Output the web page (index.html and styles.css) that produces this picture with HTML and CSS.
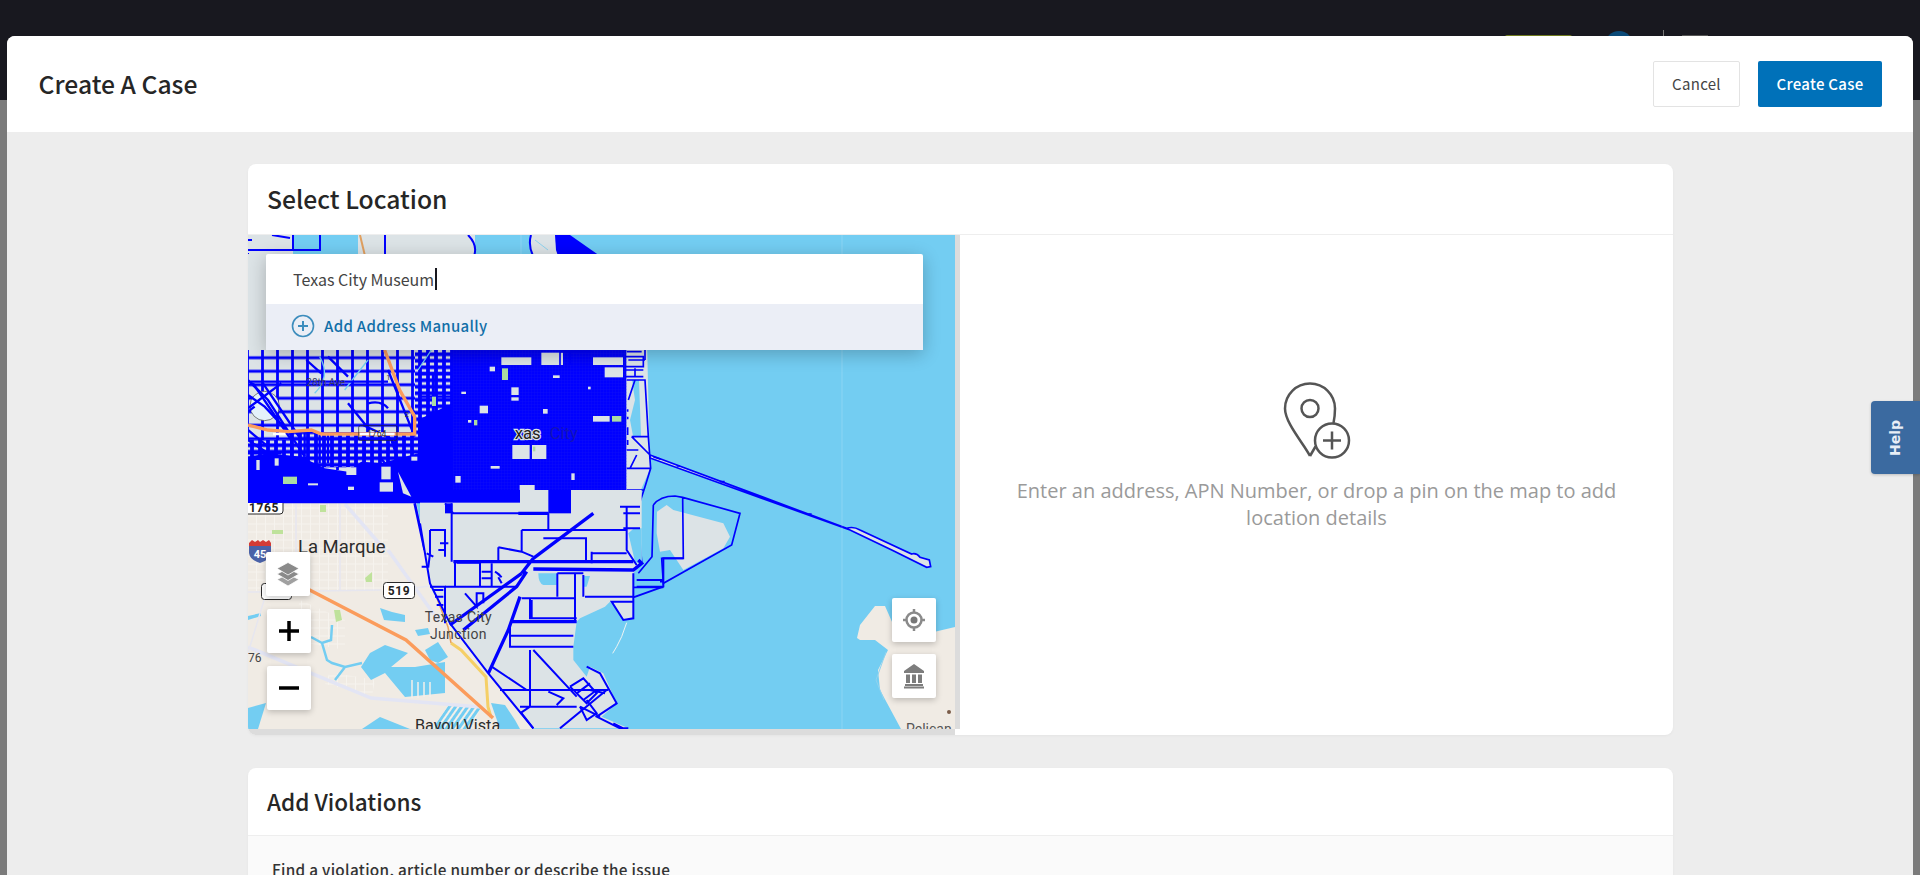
FILE: index.html
```html
<!DOCTYPE html>
<html lang="en">
<head>
<meta charset="utf-8">
<title>Create A Case</title>
<link rel="stylesheet" href="styles.css">
</head>
<body>
<div class="backdrop">
  <div class="topbar">
    <span class="peek-badge"></span>
    <span class="peek-avatar"></span>
    <span class="peek-rule"></span>
    <span class="peek-dots"></span>
  </div>
</div>
<main class="modal">
  <header class="modal-head">
    <h1 class="modal-title">Create A Case</h1>
    <div class="modal-actions">
      <button class="btn btn-plain">Cancel</button>
      <button class="btn btn-primary">Create Case</button>
    </div>
  </header>
  <div class="modal-body">
    <section class="card">
      <h2 class="card-title">Select Location</h2>
      <div class="location">
        <div class="map-col">
          <div class="map">
            <svg class="map-svg" viewBox="248 235 707 494" width="707" height="494" aria-hidden="true">
              <defs>
                <pattern id="streets" width="15" height="13.5" patternUnits="userSpaceOnUse">
                  <rect width="15" height="13.5" fill="#dce3e6"/>
                  <path d="M7.500 0V13.500M0 6.750H15" stroke="#0000ff" stroke-width="2.800" fill="none"/>
                </pattern>
                <pattern id="streets-fine" width="8" height="6.500" patternUnits="userSpaceOnUse">
                  <rect width="8" height="6.500" fill="#dce3e6"/>
                  <path d="M4 0V6.500M0 3.250H8" stroke="#0000ff" stroke-width="3.800" fill="none"/>
                </pattern>
                <pattern id="town" width="9" height="8" patternUnits="userSpaceOnUse">
                  <path d="M4.500 0V8M0 4H9" stroke="#f6f3ee" stroke-width="1" fill="none"/>
                </pattern>
                <pattern id="dense" width="9" height="9" patternUnits="userSpaceOnUse">
                  <path d="M4.500 0V9M0 4.500H9" stroke="#1212f6" stroke-width="1" fill="none"/>
                </pattern>
                <pattern id="marina" width="5" height="5" patternUnits="userSpaceOnUse" patternTransform="rotate(35)">
                  <rect width="5" height="5" fill="#73cdf2"/>
                  <rect width="2" height="5" fill="#f3f0ea"/>
                </pattern>
              </defs>

              <rect class="water" x="248" y="235" width="707" height="494"/>

              <!-- mainland -->
              <path class="land" d="M248 500H416L425 550L432 590L450 625L488 673L533 729H248Z"/>
              <rect class="town" x="248" y="503" width="140" height="88"/>
              <path class="town" d="M300 600L345 620L345 650L290 640Z"/>
              <path class="town" d="M330 672L375 680L372 696L325 684Z"/>

              <!-- water in the mainland -->
              <path class="water" d="M370 653L385 645L408 653L391 667L415 667L445 662L445 693L405 697L385 673L371 680L361 667Z"/>
              <path class="water" d="M380 608L392 612L405 615L405 622L384 620Z"/>
              <path class="water" d="M415 630L428 628L430 634L418 636Z"/>
              <path class="water" d="M425 650L438 642L448 657L438 663L430 660Z"/>
              <path class="water" d="M248 708L266 703L258 729H248Z"/>
              <path class="water" d="M362 729L380 717L410 729Z"/>
              <path class="water" d="M491 703L505 705L515 720L520 729L500 729Z"/>
              <path class="water" d="M248 616L261 613V616L248 620Z"/>
              <path class="canal" d="M311 637L322 643L331 640L332 625M322 643L327 660L332 663L345 667L362 663M345 667L335 680"/>
              <path class="marina" d="M435 725L450 703L481 708L470 729H435Z"/>
              <path class="marina-b" d="M412 698V680M418 698V682M424 697V682M430 697V682"/>

              <!-- mainland roads -->
              <path class="road" d="M248 647L371 698L481 707"/>
              <path class="road" d="M388 550L438 620"/>
              <path class="road-thin" d="M265 597L248 653M248 592L381 590M414 588L430 586M340 504V590M296 504V590"/>
              <path class="road" d="M345 504L385 550"/>
              <path class="pond" d="M334 610L340 610L342 620L336 622Z"/>
              <path class="pond" d="M272 530H283V534H272Z"/>
              <path class="pond" d="M320 505H326V512H320Z"/>
              <path class="pond" d="M365 578L372 572V582H366Z"/>
              <path class="hwy-y" d="M451 643L461 650L486 677L488 707L491 717"/>
              <path class="hwy-o" d="M300 585L406 640L493 718"/>
              <path class="hwy-thin" d="M415 503L425 550L430 580L448 627L451 643"/>

              <!-- far island -->
              <path class="land" d="M857 638L860 625L875 606L885 606L900 640L955 627V729H901L880 690L878 670L888 650L875 640L860 640Z"/>
              <path class="canal-thin" d="M886 652L876 680L884 700"/>
              <circle class="poi" cx="949" cy="712" r="2"/>

              <!-- city base -->
              <path class="parcel" d="M248 235H293V256H248ZM358 235H475V256H358ZM531 235H560V256H531Z"/>
              <path class="parcel" d="M248 255H645L650 469L640 492H415L416 503H248Z"/>
              <rect class="grid" x="248" y="350" width="205" height="120"/>
              <rect class="grid-fine" x="290" y="432" width="130" height="35"/>
              <rect class="grid-fine" x="415" y="350" width="42" height="100"/>
              <rect class="grid-fine" x="248" y="440" width="50" height="30"/>
              <path class="water" d="M632 380L639 380L641 436L633 436L630 420L635 400Z"/>

              <!-- top strip, peeking over the search box -->
              <g class="parcels">
                <path d="M248 250H320V235M293 235V250M248 240H252M272 235L290 238M248 253V254"/>
                <path class="pl-b" d="M385 235V256M531 235Q528 245 533 256"/>
                <path d="M468 235Q478 245 474 256"/>
                <path class="solid" d="M555 235L570 235L600 256H558L556 250Z"/>
                <path class="canal-thin" d="M535 240L548 250"/>
                <path class="hwy-line" d="M360 235L365 256"/>
              </g>

              <!-- zoom 6 coordinates: west and centre of the city -->
              <g transform="translate(248 340) scale(.33333)">
                <g class="canal-w">
                  <path d="M510 90L550 30M555 170V205M215 50Q250 110 200 160M360 60Q320 110 290 150"/>
                </g>
                <circle cx="50" cy="198" r="44" fill="#e4f1fa" stroke="#444" stroke-width="2"/>
                <g class="lines-6">
                  <path d="M0 125H420M0 165L50 200L120 275M0 120L60 180L170 350M20 200L0 215M100 130L0 205M300 190L365 270M360 190Q400 180 420 205M420 90L500 290M510 100H610M510 170H610M555 100V230"/>
                  <path d="M240 50L300 110M175 60L220 100M345 255L420 290L440 310M395 350L500 480M430 300L470 420M0 340H100M240 280V370M300 280V370M350 300V380"/>
                  <path d="M15 130L130 300M45 130L160 300M0 270L60 320M130 270V350M170 270V350M215 285V370M0 300L60 340M480 360L530 380M440 380L500 420"/>
                </g>
                <path class="solid" d="M615 30H1135V460H970V525H900V460H810V510H600V490H0V350L60 340L160 350L230 385L300 395L340 365L400 370L510 340V240L560 215L615 190Z"/>
                <path fill="url(#dense)" d="M615 30H1135V460H615Z"/>
                <g class="holes">
                  <rect x="760" y="52" width="90" height="23"/>
                  <rect x="880" y="38" width="65" height="37"/>
                  <rect x="1035" y="52" width="90" height="23"/>
                  <rect x="1070" y="82" width="55" height="30"/>
                  <rect x="790" y="142" width="22" height="23"/>
                  <rect x="790" y="172" width="22" height="10"/>
                  <rect x="695" y="197" width="25" height="23"/>
                  <rect x="1035" y="228" width="50" height="17"/>
                  <rect x="793" y="315" width="52" height="42"/>
                  <rect x="852" y="315" width="43" height="42"/>
                  <rect x="885" y="207" width="14" height="14"/>
                  <rect x="728" y="378" width="27" height="8"/>
                  <rect x="622" y="408" width="16" height="20"/>
                  <rect x="295" y="382" width="30" height="23"/>
                  <rect x="400" y="380" width="28" height="38"/>
                  <rect x="395" y="427" width="40" height="28"/>
                  <rect x="970" y="400" width="10" height="20"/>
                  <rect x="725" y="80" width="16" height="14"/>
                  <rect x="915" y="106" width="20" height="8"/>
                  <rect x="1020" y="140" width="8" height="8"/>
                  <rect x="660" y="240" width="10" height="8"/>
                  <rect x="640" y="155" width="14" height="7"/>
                  <rect x="700" y="470" width="22" height="9"/>
                  <rect x="640" y="452" width="14" height="7"/>
                  <rect x="550" y="455" width="26" height="7"/>
                  <rect x="80" y="355" width="12" height="22"/>
                  <rect x="25" y="360" width="10" height="30"/>
                  <rect x="300" y="440" width="18" height="10"/>
                  <rect x="180" y="430" width="30" height="6"/>
                  <rect x="490" y="350" width="18" height="12"/>
                  <path d="M450 395L490 470L465 460Z"/>
                  <path d="M815 435H860V450L900 460V490H815Z"/>
                </g>
                <g class="greens">
                  <rect x="762" y="85" width="18" height="35"/>
                  <rect x="1092" y="228" width="28" height="17"/>
                  <rect x="105" y="410" width="42" height="22"/>
                  <rect x="678" y="240" width="10" height="16"/>
                  <rect x="552" y="170" width="12" height="28"/>
                  <rect x="855" y="320" width="7" height="14"/>
                </g>
                <g class="lines-6 thick">
                  <path d="M815 480L900 468M810 522H1000L1040 490M970 478H1135M970 505H1040M1135 450L1135 620"/>
                  <path d="M1040 490Q1060 470 1075 490T1100 490Q1130 500 1125 530H1085Q1065 520 1050 525L1040 510Z"/>
                  <path d="M500 490L530 630M610 495V525M815 570V640M820 570H1015V640"/>
                  <path d="M548 570H600V625M590 610H560"/>
                  <path d="M900 520V620"/>
                </g>
                <path class="hwy-white" d="M0 255L60 270L120 275L190 270L220 282H500V230L455 150L410 30"/>
                <path class="hwy-cap" d="M75 282H112M335 282H440"/>
                <g class="shield-outline"><rect x="332" y="257" width="115" height="44" rx="5"/></g>
                <text class="lab-dark small" x="175" y="137">28th Ave</text>
                <text class="lab-dark" x="357" y="292" font-size="26" fill="#222" stroke="none">1764</text>
                <text class="lab-big" x="800" y="298">xas</text>
                <text class="lab-dim" x="905" y="298">City</text>
                <text class="lab-dark" x="415" y="120" font-size="22">1</text>
                <text class="lab-dark" x="470" y="232" font-size="22">2</text>
              </g>

              <!-- zoom 7 coordinates: east edge, causeway, dredge island -->
              <g transform="translate(560 340) scale(.33333)">
                <path class="parcel" d="M270 345L860 565Q880 558 900 570L1055 642Q1070 638 1080 652L1108 660L1112 680L1100 682L1000 632L870 570L270 354Z"/>
                <path class="pier" d="M270 345L860 565Q880 558 900 570L1055 642Q1070 638 1080 652L1108 660L1112 680L1100 682L1000 632L870 570L270 354Z"/>
                <path class="pier" d="M350 378h10M480 425h14M745 522h10M280 350l22 8"/>
                <path class="parcel" d="M291 515L320 495L340 510L490 550L510 590L490 625L370 690L330 630L300 635L290 580Z"/>
                <path class="pier" d="M280 495Q300 468 345 468L368 472L540 520L515 615L310 730L305 655H370L368 475M280 495L276 650L235 700M250 725H310M222 742H310"/>
                <g class="pier">
                  <path d="M255 30V60M200 120H255L265 290L272 385L255 440L232 510L245 665L215 700M205 180L225 120M215 290H265M215 290L270 345M200 385H272M200 450H250M230 345L210 385M200 330H235"/>
                  <path d="M195 50H250V80H195M205 60H255M195 90H250M195 110H250M225 85V110M200 35H245"/>
                  <path d="M203 208V215M203 230V238M203 262V285M203 300V315M0 35V75M30 35V75"/>
                  <path d="M0 35H95M200 510H240M200 565H240M195 535H240M100 520H200"/>
                </g>
              </g>

              <!-- zoom 9 coordinates: south of the city -->
              <g transform="translate(420 490) scale(.33333)">
                <path class="parcel" d="M0 0H665V220L640 250V322L640 385L610 390L580 345L570 335L555 350L480 385L470 395L460 470V510L500 560L510 530L550 550L590 640L545 680L625 715H340L205 550L90 400L30 280L0 100Z"/>
                <path class="water" d="M355 250H410V285H370Q355 280 355 250Z"/>
                <path class="water" d="M490 258H510L500 290H492Z"/>
                <path class="water" d="M642 115H665V225L645 215L625 130Z"/>
                <path class="water" d="M650 260H720V285H650Z"/>
                <path class="reef" d="M620 398L605 440L590 470L578 490"/>
                <g class="solid-6">
                  <rect x="385" y="0" width="68" height="70"/>
                  <rect x="300" y="66" width="85" height="8"/>
                  <rect x="0" y="0" width="300" height="38"/>
                  <rect x="75" y="40" width="22" height="30"/>
                </g>
                <g class="lines-9">
                  <path d="M95 40V215M75 40L100 70H385M385 70V120M305 120H460M305 120V185M235 172L305 185L340 200M235 172V215M370 145H498V215M515 190H620M515 185V220"/>
                  <path d="M30 120H75V200M30 120V190L25 230L5 230M60 160H85M55 180H75V200M20 190L40 200"/>
                  <path d="M105 215V290M180 215V290M185 245H215M185 265H215M215 220V290M110 218H178M75 290H290"/>
                  <path d="M30 290H75V400M40 300H70M45 320H70M50 345H70M135 310L170 350V310H190V340"/>
                  <path d="M305 325H465M335 330V385M465 250V395M412 250V320M490 255V320M412 250H490M495 320H640M330 325V385H470M270 400V470H460M270 437H460"/>
                  <path d="M330 480V650M340 480L470 620M240 600H565M215 530L320 600M385 605L430 625L410 645M300 650H470M305 670L340 715M300 670L330 650M420 715L560 600"/>
                  <path d="M450 590L490 565L530 610L500 640L450 590M470 610L510 580M490 630L530 600M510 600L555 610M480 650L500 690L530 670L500 630"/>
                  <path d="M500 530L540 550L590 640L530 680L600 715H625M580 700L610 715M480 650L540 680"/>
                  <path d="M620 50V180L650 225M600 50H660M610 70H660M610 115H660M455 120H620M640 250V322L730 290V205H790M650 270H730M650 290H730M640 322V385L610 390L575 335H640"/>
                  <path d="M232 250L245 262M225 245L240 255M235 262L245 280"/>
                  <path d="M0 100L30 280L90 400L205 550L340 715"/>
                </g>
                <g class="lines-9 heavy">
                  <path d="M100 215H640M295 70H385M275 395H470M300 320L265 420L205 550M305 250L90 405M130 420L290 290L320 245M340 205L520 70M305 250L340 205"/>
                  <path d="M340 237L640 240L665 220L655 210"/>
                </g>
                <text class="lab" x="14" y="395">Texas City</text>
                <text class="lab" x="30" y="447">Junction</text>
              </g>

              <!-- seams -->
              <path class="seam" d="M842 235V729M521 235V340"/>

              <!-- labels and shields -->
              <text class="lab lab-town" x="298" y="553">La Marque</text>
              <text class="lab lab-town lab-bayou" x="415" y="731">Bayou Vista</text>
              <text class="lab lab-pelican" x="906" y="734">Pelican</text>
              <text class="lab lab-route" x="248" y="662">76</text>
              <g>
                <rect class="shield" x="383.500" y="582.500" width="31" height="16" rx="3"/>
                <text class="shield-text" x="399" y="595">519</text>
                <rect class="shield" x="261.500" y="583.500" width="30" height="16" rx="3"/>
                <rect class="shield" x="240" y="500" width="43" height="14" rx="3"/>
                <path class="solid" d="M240 495H284V503H240Z"/>
                <text class="shield-text" x="264" y="512">1765</text>
                <path class="i45-top" d="M249 543L252 540L255 542L258 540L260 542L263 540L266 542L269 540L271 543V546H249Z"/>
                <path class="i45" d="M249 546H271V553Q270 560 260 563Q250 560 249 553Z"/>
                <text class="i45-text" x="260" y="558">45</text>
              </g>
            </svg>

            <div class="search">
              <div class="search-field"><span class="search-value">Texas City Museum</span><span class="caret"></span></div>
              <div class="search-add">
                <svg class="add-icon" viewBox="0 0 24 24" width="24" height="24" aria-hidden="true">
                  <circle cx="12" cy="12" r="10.500"/>
                  <path d="M12 7V17M7 12H17"/>
                </svg>
                <span>Add Address Manually</span>
              </div>
            </div>

            <button class="map-btn btn-layers" aria-label="Layers">
              <svg viewBox="0 0 26 26" width="26" height="26" aria-hidden="true">
                <path class="ico-l3" d="M13 13L24 18.500L13 25L2 18.500Z"/>
                <path class="ico-l2" d="M13 7.500L24 13L13 19.500L2 13Z"/>
                <path class="ico-l1" d="M13 1.500L24 7.500L13 14L2 7.500Z"/>
              </svg>
            </button>
            <button class="map-btn btn-plus" aria-label="Zoom in">
              <svg viewBox="0 0 22 22" width="22" height="22" aria-hidden="true"><path d="M1 11H21M11 1V21"/></svg>
            </button>
            <button class="map-btn btn-minus" aria-label="Zoom out">
              <svg viewBox="0 0 22 22" width="22" height="22" aria-hidden="true"><path d="M1 11H21"/></svg>
            </button>
            <button class="map-btn btn-locate" aria-label="My location">
              <svg viewBox="0 0 24 24" width="24" height="24" aria-hidden="true">
                <circle class="ico-ring" cx="12" cy="12" r="7.500"/>
                <circle class="ico-dot" cx="12" cy="12" r="3.500"/>
                <path class="ico-ring" d="M12 1V4.500M12 19.500V23M1 12H4.500M19.500 12H23"/>
              </svg>
            </button>
            <button class="map-btn btn-museum" aria-label="Civic buildings">
              <svg viewBox="0 0 24 26" width="24" height="26" aria-hidden="true">
                <path class="ico-fill" d="M12 1L22 8V10H2V8ZM4 11.500H8V20H4ZM10 11.500H14V20H10ZM16 11.500H20V20H16ZM3 21H21V23H3ZM2 23.500H22V25.500H2Z"/>
              </svg>
            </button>
          </div>
        </div>
        <div class="map-gutter"></div>
        <div class="location-empty">
          <svg class="pin-plus" viewBox="0 0 100 100" width="100" height="100" aria-hidden="true">
            <circle cx="50" cy="38.500" r="8.500"/>
            <path d="M50 86L55.500 76.500M50 86C44 74 25 53 25 38.500A25 25 0 0 1 75 38.500C75 43 74.500 48 73.500 53"/>
            <circle cx="72" cy="70.500" r="17"/>
            <path d="M63 70.500H81M72 61.500V79.500"/>
          </svg>
          <p class="empty-text">Enter an address, APN Number, or drop a pin on the map to add location details</p>
        </div>
      </div>
    </section>

    <section class="card card-violations">
      <h2 class="card-title card-title-b">Add Violations</h2>
      <div class="violations-body">
        <label class="field-label">Find a violation, article number or describe the issue</label>
      </div>
    </section>
  </div>
</main>
<aside class="help-tab"><span class="help-text">Help</span></aside>
</body>
</html>
```
FILE: styles.css
```css
* { box-sizing: border-box; }
html, body { margin: 0; height: 875px; overflow: hidden; }
body {
  position: relative;
  width: 1920px;
  background: #7b7b7b;
  font-family: "Noto Sans CJK SC", "Noto Sans", sans-serif;
  color: #222;
}

/* dimmed page behind the dialog */
.backdrop { position: absolute; inset: 0; }
.topbar { position: relative; height: 100px; background: #18181f; }
.peek-badge { position: absolute; left: 1505px; top: 35px; width: 67px; height: 2px; background: #6f7a1e; border-radius: 2px 2px 0 0; }
.peek-avatar { position: absolute; left: 1605px; top: 31px; width: 28px; height: 28px; border-radius: 50%; background: #0a4a78; }
.peek-rule { position: absolute; left: 1663px; top: 30px; width: 1px; height: 8px; background: #777; }
.peek-dots { position: absolute; left: 1682px; top: 35px; width: 26px; height: 1px; background: #555; }

/* dialog */
.modal {
  position: absolute;
  left: 7px;
  top: 36px;
  width: 1906px;
  height: 839px;
  background: #ededed;
  border-radius: 8px 8px 0 0;
  overflow: hidden;
  display: flex;
  flex-direction: column;
}
.modal-head {
  flex: none;
  height: 96px;
  background: #fff;
  display: flex;
  align-items: center;
  justify-content: space-between;
  padding: 0 31px 0 31.500px;
}
.modal-title { margin: 0 0 2px; font-size: 24.700px; font-weight: 500; color: #262626; }
.modal-actions { display: flex; gap: 18px; margin-top: -1px; }
.btn {
  height: 46px;
  border-radius: 2px;
  font-family: inherit;
  font-size: 15px;
  letter-spacing: .3px;
  cursor: pointer;
}
.btn-plain { width: 87px; background: #fff; border: 1px solid #e3e3e3; color: #444; }
.btn-primary { width: 124px; background: #0071b9; border: 0; color: #fff; font-weight: 500; }

.modal-body {
  flex: 1;
  padding: 32px 240px 0 241px;
  display: flex;
  flex-direction: column;
  gap: 33px;
}
.card {
  background: #fff;
  border-radius: 8px;
  flex: none;
  overflow: hidden;
  box-shadow: 0 1px 3px rgba(0,0,0,.04);
}
.card-title {
  margin: 0;
  height: 71px;
  padding: 0 19px 2px;
  display: flex;
  align-items: center;
  border-bottom: 1px solid #eee;
  font-size: 24.700px;
  font-weight: 500;
  color: #262626;
}
.card-title-b { height: 68px; font-size: 22.500px; }

.location { display: flex; height: 500px; }
.map-col { flex: none; width: 707px; border-bottom: 6px solid #dcdcdc; }
.map { position: relative; width: 707px; height: 494px; overflow: hidden; }
.map-svg { display: block; }
.map-gutter { flex: none; width: 5px; height: 494px; background: #dcdcdc; }

/* map drawing */
.water { fill: #73cdf2; }
.land { fill: #f0ebe4; }
.town { fill: url(#town); }
.parcel { fill: #dce3e6; }
.grid { fill: url(#streets); }
.grid-fine { fill: url(#streets-fine); }
.solid { fill: #0000ff; stroke: none; }
.solid-6 rect { fill: #0000ff; }
.holes rect, .holes path { fill: #dce3e6; }
.greens rect { fill: #abdba3; }
.canal { fill: none; stroke: #73cdf2; stroke-width: 2.500; }
.canal-thin { fill: none; stroke: #8fd3ef; stroke-width: 1; }
.canal-w { fill: none; stroke: #73cdf2; stroke-width: 4; }
.marina { fill: url(#marina); }
.marina-b { fill: none; stroke: #f3f0ea; stroke-width: 1.5; }
.road { fill: none; stroke: #e3e5f4; stroke-width: 3.500; }
.road-thin { fill: none; stroke: #e6e6ef; stroke-width: 1.500; }
.pond { fill: #bfe29b; }
.hwy-y { fill: none; stroke: #f5cf66; stroke-width: 3; }
.hwy-o { fill: none; stroke: #fb9c5c; stroke-width: 3.500; }
.hwy-thin { fill: none; stroke: #e8a15c; stroke-width: 1.500; }
.hwy-line { fill: none; stroke: #e0a060; stroke-width: 1.500; }
.hwy-white { fill: none; stroke: #fb9c5c; stroke-width: 10; }
.hwy-cap { fill: none; stroke: #fff; stroke-width: 8; }
.poi { fill: #7a5c48; }
.parcels path { fill: none; stroke: #0000ff; stroke-width: 2; }
.parcels .solid { fill: #0000ff; stroke: none; }
.parcels .hwy-line { stroke: #e0a060; }
.parcels .canal-thin { stroke: #8fd3ef; stroke-width: 1; }
.lines-6 path { fill: none; stroke: #0000ff; stroke-width: 7; }
.lines-6.thick path { stroke-width: 8; }
.lines-9 path { fill: none; stroke: #0000ff; stroke-width: 6; }
.lines-9.heavy path { stroke-width: 10; }
.pier, .pier path { fill: none; stroke: #0000ff; stroke-width: 5; }
.reef { fill: none; stroke: #eef3f3; stroke-width: 3; }
.seam { fill: none; stroke: rgba(255,255,255,.18); stroke-width: 1; }
.shield-outline rect { fill: none; stroke: #222; stroke-width: 2; }
.shield { fill: #fff; stroke: #2a2a2a; stroke-width: 1; }
.shield-text { font: 700 12px "Roboto", sans-serif; fill: #222; text-anchor: middle; letter-spacing: .6px; }
.i45-top { fill: #d33b36; }
.i45 { fill: #4a62a8; }
.i45-text { font: 700 11px "Roboto", sans-serif; fill: #fff; text-anchor: middle; }
.lab { font-family: "Roboto", sans-serif; font-size: 42px; fill: #444; letter-spacing: 1px; }
.lab-town { font-size: 18.500px; fill: #2c2c2c; letter-spacing: 0; }
.lab-bayou { font-size: 16.200px; }
.lab-pelican { font-size: 14px; fill: #555; letter-spacing: 0; }
.lab-route { font-size: 12px; fill: #444; letter-spacing: 0; }
.lab-dark { font-family: "Roboto", sans-serif; fill: #333; }
.lab-dark.small { font-size: 30px; fill: #3c3c6a; }
.lab-big {
  font-family: "Roboto", sans-serif;
  font-size: 50px;
  fill: #222;
  stroke: #dce3e6;
  stroke-width: 7px;
  paint-order: stroke;
}
.lab-dim { font-family: "Roboto", sans-serif; font-size: 50px; fill: #1414b8; }

/* search */
.search {
  position: absolute;
  left: 18px;
  top: 19px;
  width: 657px;
  border-radius: 2px;
  background: #fff;
  box-shadow: 0 4px 18px rgba(0,0,0,.24);
}
.search-field {
  height: 50px;
  padding-left: 27px;
  display: flex;
  align-items: center;
  font-size: 16px;
  color: #444;
}
.caret { width: 2px; height: 22px; background: #18181f; margin-left: 1px; }
.search-add {
  height: 46px;
  padding: 0 0 3px 25px;
  display: flex;
  align-items: center;
  gap: 9px;
  background: #ebeef6;
  color: #116fa8;
  font-size: 15px;
  font-weight: 500;
  letter-spacing: .3px;
}
.add-icon { fill: none; stroke: #3d8dbd; stroke-width: 1.6; }
.add-icon path { stroke-width: 2; }

/* map buttons */
.map-btn {
  position: absolute;
  width: 44px;
  height: 44px;
  padding: 0;
  border: 0;
  border-radius: 2px;
  background: #fff;
  display: flex;
  align-items: center;
  justify-content: center;
  box-shadow: 0 2px 6px rgba(0,0,0,.22);
}
.btn-layers { left: 18px; top: 317px; }
.btn-plus { left: 19px; top: 374px; }
.btn-minus { left: 19px; top: 431px; }
.btn-locate { left: 644px; top: 363px; }
.btn-museum { left: 644px; top: 419px; }
.btn-plus path, .btn-minus path { fill: none; stroke: #000; stroke-width: 3.500; }
.ico-l1 { fill: #8a8a8a; stroke: #fff; stroke-width: .8; }
.ico-l2 { fill: #8a8a8a; stroke: #fff; stroke-width: .8; }
.ico-l3 { fill: #a0a0a0; stroke: #fff; stroke-width: .8; }
.ico-ring { fill: none; stroke: #8a8a8a; stroke-width: 2.500; }
.ico-dot { fill: #777; }
.ico-fill { fill: #7d7d7d; }

/* empty state */
.location-empty {
  flex: 1;
  padding-top: 135px;
  display: flex;
  flex-direction: column;
  align-items: center;
}
.pin-plus { flex: none; margin-right: 13px; fill: none; stroke: #555; stroke-width: 2.500; }
.empty-text {
  width: 620px;
  margin: 7px 0 0;
  text-align: center;
  font-family: "Open Sans", sans-serif;
  font-size: 20px;
  line-height: 27px;
  color: #9a9a9a;
}

/* violations */
.violations-body { background: #fafafa; height: 120px; padding: 21px 21px 0 24px; }
.field-label { font-size: 15.300px; font-weight: 500; color: #333; letter-spacing: .3px; }

/* help */
.help-tab {
  position: absolute;
  left: 1871px;
  top: 401px;
  width: 49px;
  height: 73px;
  background: #3b6aa0;
  border-radius: 4px 0 0 4px;
  display: flex;
  align-items: center;
  justify-content: center;
  box-shadow: 0 1px 3px rgba(0,0,0,.2);
}
.help-text {
  transform: rotate(-90deg);
  font-family: "DejaVu Sans", sans-serif;
  font-weight: 700;
  font-size: 14px;
  color: #e8eef6;
}
```
